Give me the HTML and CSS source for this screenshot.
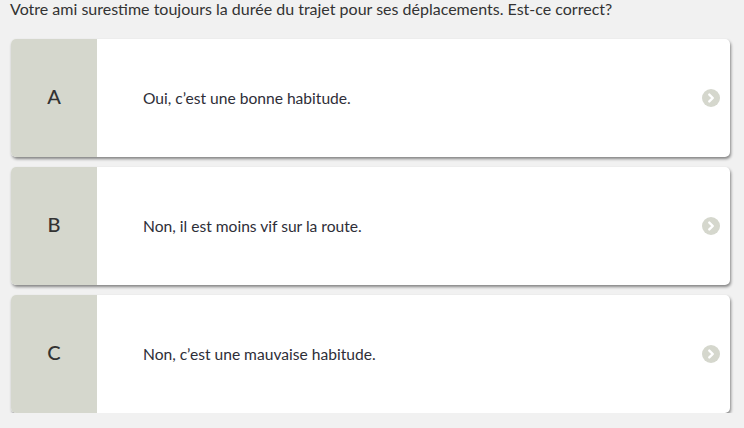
FILE: index.html
```html
<!DOCTYPE html>
<html lang="fr">
<head>
<meta charset="utf-8">
<link rel="stylesheet" href="styles.css">
</head>
<body>
<div class="page">
  <p class="question">Votre ami surestime toujours la durée du trajet pour ses déplacements. Est-ce correct?</p>
  <div class="answers">
    <div class="card">
      <div class="letter">A</div>
      <div class="text">Oui, c’est une bonne habitude.</div>
      <svg class="arrow" width="18" height="18" viewBox="0 0 18 18"><circle cx="9" cy="9" r="9" fill="#d5d7cd"/><path d="M7.3 5.6 L10.8 9 L7.3 12.4" fill="none" stroke="#fff" stroke-width="2.4" stroke-linecap="round" stroke-linejoin="round"/></svg>
    </div>
    <div class="card">
      <div class="letter">B</div>
      <div class="text">Non, il est moins vif sur la route.</div>
      <svg class="arrow" width="18" height="18" viewBox="0 0 18 18"><circle cx="9" cy="9" r="9" fill="#d5d7cd"/><path d="M7.3 5.6 L10.8 9 L7.3 12.4" fill="none" stroke="#fff" stroke-width="2.4" stroke-linecap="round" stroke-linejoin="round"/></svg>
    </div>
    <div class="card">
      <div class="letter">C</div>
      <div class="text">Non, c’est une mauvaise habitude.</div>
      <svg class="arrow" width="18" height="18" viewBox="0 0 18 18"><circle cx="9" cy="9" r="9" fill="#d5d7cd"/><path d="M7.3 5.6 L10.8 9 L7.3 12.4" fill="none" stroke="#fff" stroke-width="2.4" stroke-linecap="round" stroke-linejoin="round"/></svg>
    </div>
  </div>
</div>
</body>
</html>
```
FILE: styles.css
```css
html, body {
  margin: 0;
  padding: 0;
  background: #f1f1f1;
}
body {
  font-family: Lato, "Open Sans", sans-serif;
  color: #333;
}
.page {
  padding: 0 14px 0 11px;
}
.question {
  margin: 0 0 0 -1px;
  font-size: 16px;
  line-height: 18px;
  height: 39px;
  color: #333;
}
.answers {
  display: flex;
  flex-direction: column;
  gap: 10px;
}
.card {
  display: flex;
  align-items: center;
  height: 118px;
  background: #fff;
  border-radius: 5px;
  overflow: hidden;
  box-shadow: 1px 2px 3px rgba(0,0,0,0.45);
}
.letter {
  width: 86px;
  align-self: stretch;
  display: flex;
  align-items: center;
  justify-content: center;
  padding-bottom: 4px;
  box-sizing: border-box;
  background: #d5d7cd;
  font-size: 20px;
  font-weight: 500;
  color: #333;
}
.text {
  flex: 1;
  padding-left: 46px;
  font-size: 15.6px;
  color: #2e2e38;
}
.arrow {
  margin-right: 10px;
  display: block;
}
```
